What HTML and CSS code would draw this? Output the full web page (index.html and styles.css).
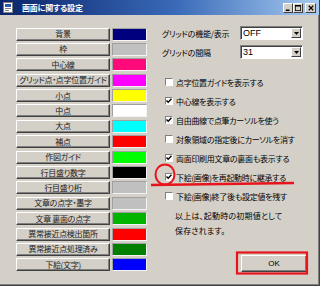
FILE: index.html
```html
<!DOCTYPE html>
<html lang="ja">
<head>
<meta charset="utf-8">
<title>画面に関する設定</title>
<link rel="stylesheet" href="styles.css">
</head>
<body>
<div class="window">
  <div class="titlebar">
    <span class="ticon"><svg width="10" height="11" viewBox="0 0 10 11"><rect x="0.5" y="0.5" width="9" height="10" fill="#fff" stroke="#808080"/><rect x="2" y="2" width="6" height="3" fill="#2a5ab8"/><rect x="2" y="6" width="6" height="1" fill="#808080"/><rect x="2" y="8" width="4" height="1" fill="#808080"/></svg></span>
    <span class="ttext">画面に関する設定</span>
    <div class="tbtns">
      <span class="tb"><svg width="8" height="8" viewBox="0 0 8 8"><rect x="1" y="6" width="5" height="2" fill="#000"/></svg></span>
      <span class="tb"><svg width="8" height="8" viewBox="0 0 8 8"><rect x="0.5" y="0.5" width="7" height="7" fill="none" stroke="#000"/><rect x="0" y="0" width="8" height="2" fill="#000"/></svg></span>
      <span class="tb tbclose"><svg width="8" height="8" viewBox="0 0 8 8"><path d="M1 1 L7 7 M7 1 L1 7" stroke="#000" stroke-width="1.6"/></svg></span>
    </div>
  </div>
  <div class="main">
    <div class="colors">
      <div class="crow"><div class="btn">背景</div><div class="sw c-navy"></div></div>
      <div class="crow"><div class="btn">枠</div><div class="sw c-silver"></div></div>
      <div class="crow"><div class="btn">中心線</div><div class="sw c-rose"></div></div>
      <div class="crow"><div class="btn">グリッド点・点字位置ガイド</div><div class="sw c-magenta"></div></div>
      <div class="crow"><div class="btn">小点</div><div class="sw c-yellow"></div></div>
      <div class="crow"><div class="btn">中点</div><div class="sw c-white"></div></div>
      <div class="crow"><div class="btn">大点</div><div class="sw c-cyan"></div></div>
      <div class="crow"><div class="btn">補点</div><div class="sw c-red"></div></div>
      <div class="crow"><div class="btn">作図ガイド</div><div class="sw c-lime"></div></div>
      <div class="crow"><div class="btn">行目盛り数字</div><div class="sw c-black"></div></div>
      <div class="crow"><div class="btn">行目盛り桁</div><div class="sw c-silver"></div></div>
      <div class="crow"><div class="btn">文章の点字・墨字</div><div class="sw c-silver"></div></div>
      <div class="crow"><div class="btn">文章 裏面の点字</div><div class="sw c-green"></div></div>
      <div class="crow"><div class="btn">異常接近点検出箇所</div><div class="sw c-red"></div></div>
      <div class="crow"><div class="btn">異常接近点処理済み</div><div class="sw c-dkgreen"></div></div>
      <div class="crow"><div class="btn">下絵(文字)</div><div class="sw c-blue"></div></div>
    </div>
    <div class="opts">
      <div class="field"><span class="flabel">グリッドの機能/表示</span><div class="select"><span class="val">OFF</span><span class="arrow"><svg width="5" height="3" viewBox="0 0 5 3"><path d="M0 0 H5 L2.5 3 Z" fill="#000"/></svg></span></div></div>
      <div class="field f2"><span class="flabel">グリッドの間隔</span><div class="select"><span class="val">31</span><span class="arrow"><svg width="5" height="3" viewBox="0 0 5 3"><path d="M0 0 H5 L2.5 3 Z" fill="#000"/></svg></span></div></div>
      <div class="checks">
        <div class="chk"><span class="box"></span><span>点字位置ガイドを表示する</span></div>
        <div class="chk"><span class="box on"><svg width="6" height="6" viewBox="0 0 6 6"><path d="M0.5 2.5 L2.2 4.3 L5.5 0.8" fill="none" stroke="#000" stroke-width="1.4"/></svg></span><span>中心線を表示する</span></div>
        <div class="chk"><span class="box on"><svg width="6" height="6" viewBox="0 0 6 6"><path d="M0.5 2.5 L2.2 4.3 L5.5 0.8" fill="none" stroke="#000" stroke-width="1.4"/></svg></span><span>自由曲線で点筆カーソルを使う</span></div>
        <div class="chk"><span class="box"></span><span>対象領域の指定後にカーソルを消す</span></div>
        <div class="chk"><span class="box on"><svg width="6" height="6" viewBox="0 0 6 6"><path d="M0.5 2.5 L2.2 4.3 L5.5 0.8" fill="none" stroke="#000" stroke-width="1.4"/></svg></span><span>両面印刷用文章の裏面も表示する</span></div>
        <div class="chk"><span class="box on"><svg width="6" height="6" viewBox="0 0 6 6"><path d="M0.5 2.5 L2.2 4.3 L5.5 0.8" fill="none" stroke="#000" stroke-width="1.4"/></svg></span><span>下絵(画像)を再起動時に継承する</span></div>
        <div class="chk"><span class="box"></span><span>下絵(画像)終了後も設定値を残す</span></div>
      </div>
      <p class="info">以上は、起動時の初期値として<br>保存されます。</p>
      <div class="okrow"><div class="okbtn">OK</div></div>
    </div>
  </div>
  <svg class="marks" width="320" height="286" viewBox="0 0 320 286">
    <ellipse cx="165" cy="174.5" rx="9.5" ry="10" fill="none" stroke="#e8141c" stroke-width="2"/>
    <path d="M151 185 L294 183" stroke="#e8141c" stroke-width="2.6" fill="none"/>
    <rect x="237" y="252.5" width="70" height="21" fill="none" stroke="#e8141c" stroke-width="2.2"/>
  </svg>
</div>
</body>
</html>
```

FILE: styles.css
```css
* { box-sizing: border-box; }
html, body { margin: 0; padding: 0; }
body {
  width: 320px;
  height: 286px;
  overflow: hidden;
  font-family: "Noto Sans CJK JP", "Noto Sans", sans-serif;
  font-feature-settings: "palt";
  color: #000;
}
.window {
  position: relative;
  width: 320px;
  height: 286px;
  background: #d4d0c8;
  border-right: 1px solid #404040;
  border-bottom: 1px solid #404040;
  box-shadow: inset -1px -1px #808080;
  display: flex;
  flex-direction: column;
}
.titlebar {
  height: 15px;
  flex: none;
  display: flex;
  align-items: center;
  padding-left: 3px;
  padding-right: 3px;
  background: linear-gradient(to right, #0a246a, #3a6ab8 55%, #a6caf0);
}
.ticon { width: 10px; height: 11px; display: flex; }
.ttext {
  margin-left: 9px;
  color: #fff;
  font-weight: bold;
  font-size: 8px;
  line-height: 15px;
  letter-spacing: -0.2px;
}
.tbtns { margin-left: auto; display: flex; gap: 0; }
.tb {
  width: 10px;
  height: 10px;
  background: #d4d0c8;
  border: 1px solid;
  border-color: #fff #404040 #404040 #fff;
  display: flex;
  align-items: center;
  justify-content: center;
}
.tb svg { width: 6px; height: 6px; }
.tbclose { margin-left: 2px; width: 11px; }

.main {
  flex: 1;
  display: flex;
}
.colors {
  padding-left: 16px;
  padding-top: 12.5px;
  display: grid;
  grid-auto-rows: 13px;
  row-gap: 2.4px;
  align-content: start;
}
.crow {
  display: grid;
  grid-template-columns: 94px 35px;
  column-gap: 2px;
}
.btn {
  height: 13px;
  background: #d4d0c8;
  border: 1px solid;
  border-color: #fff #404040 #404040 #fff;
  box-shadow: inset -1px -1px #808080;
  font-size: 8px;
  line-height: 9px;
  padding-bottom: 1px;
  display: flex;
  align-items: center;
  justify-content: center;
  white-space: nowrap;
  letter-spacing: -0.3px;
  color: #202020;
}
.sw {
  height: 13px;
  border: 1px solid;
  border-color: #a0a0a0 #f4f4f4 #f4f4f4 #a0a0a0;
}
.c-navy { background: #00007f; }
.c-silver { background: #c0c0c0; }
.c-rose { background: #ff0a78; }
.c-magenta { background: #ff00ff; }
.c-yellow { background: #ffff00; }
.c-white { background: #ffffff; }
.c-cyan { background: #00ffff; }
.c-red { background: #ff0000; }
.c-lime { background: #00ff00; }
.c-black { background: #000000; }
.c-green { background: #00b400; }
.c-dkgreen { background: #007f00; }
.c-blue { background: #0000ff; }

.opts {
  margin-left: 13px;
  width: 157px;
  padding-top: 11px;
  padding-left: 2px;
  display: flex;
  flex-direction: column;
}
.field {
  display: grid;
  grid-template-columns: 78px 63px;
  align-items: center;
  height: 14px;
  font-size: 8px;
}
.f2 { margin-top: 5px; }
.flabel { white-space: nowrap; letter-spacing: -0.2px; }
.select {
  height: 14px;
  background: #fff;
  border: 1px solid;
  border-color: #808080 #fff #fff #808080;
  box-shadow: inset 1px 1px #404040;
  display: flex;
  align-items: center;
  padding-left: 2px;
  padding-right: 1px;
  font-family: "Liberation Sans", sans-serif;
  font-size: 9px;
}
.val { flex: 1; line-height: 12px; }
.arrow {
  width: 10px;
  height: 10px;
  background: #d4d0c8;
  border: 1px solid;
  border-color: #fff #404040 #404040 #fff;
  display: flex;
  align-items: center;
  justify-content: center;
}
.checks {
  margin-top: 13.5px;
  display: flex;
  flex-direction: column;
}
.chk {
  height: 19px;
  display: flex;
  align-items: center;
  padding-left: 3px;
  font-size: 8px;
  white-space: nowrap;
  letter-spacing: -0.3px;
}
.box {
  width: 8px;
  height: 8px;
  flex: none;
  background: #fff;
  border: 1px solid;
  border-color: #808080 #fff #fff #808080;
  margin-right: 3px;
  display: flex;
  align-items: center;
  justify-content: center;
}
.info {
  margin: 2px 0 0 13px;
  font-size: 8px;
  line-height: 15px;
  letter-spacing: 0.2px;
}
.okrow {
  margin-top: 17px;
  display: flex;
  justify-content: flex-end;
  padding-right: 0;
  width: 145px;
}
.okbtn {
  width: 66px;
  height: 17px;
  background: #d4d0c8;
  border: 1px solid;
  border-color: #fff #404040 #404040 #fff;
  box-shadow: inset -1px -1px #808080;
  font-family: "Liberation Sans", sans-serif;
  font-size: 8px;
  display: flex;
  align-items: center;
  justify-content: center;
}
.marks {
  position: absolute;
  left: 0;
  top: 0;
  pointer-events: none;
}
```
